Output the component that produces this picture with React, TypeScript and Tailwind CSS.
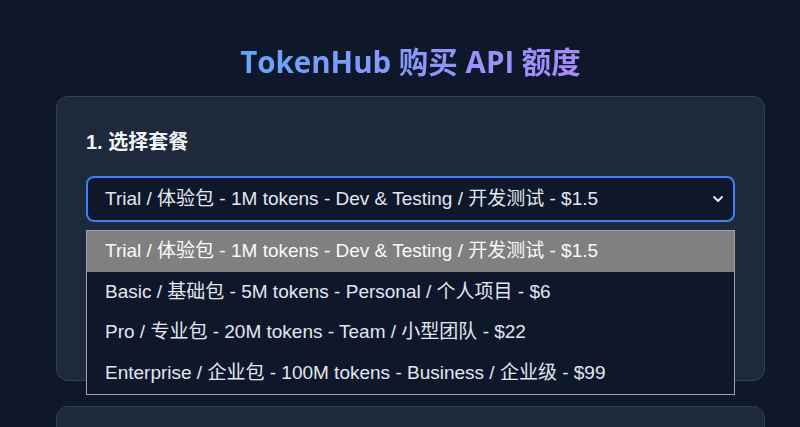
import React from "react";

const options = [
  "Trial / 体验包 - 1M tokens - Dev & Testing / 开发测试 - $1.5",
  "Basic / 基础包 - 5M tokens - Personal / 个人项目 - $6",
  "Pro / 专业包 - 20M tokens - Team / 小型团队 - $22",
  "Enterprise / 企业包 - 100M tokens - Business / 企业级 - $99",
];

const font = { fontFamily: '"Liberation Sans", Arial, "Noto Sans CJK SC", sans-serif' };

export default function App() {
  return (
    <div
      className="h-screen bg-[#0f172a] pl-[56px] pr-[35px] overflow-hidden relative"
      style={font}
    >
      <h1
        className="pt-[40px] h-[84px] leading-[44px] text-center text-[29.5px] font-bold"
        style={{ fontFamily: '"Open Sans", "Noto Sans CJK SC", sans-serif' }}
      >
        <span className="bg-gradient-to-r from-[#60a5fa] to-[#a78bfa] bg-clip-text text-transparent">
          TokenHub 购买 API 额度
        </span>
      </h1>
      <div className="mt-[12px] rounded-[12px] border border-[#334155] bg-[#1e293b] px-[29px] pt-[29px] pb-[30px]">
        <div className="text-[20px] leading-[32px] font-bold text-[#f1f5f9]">1. 选择套餐</div>
        <div className="mt-[18px] h-[46px] rounded-[8px] border-2 border-[#3b82f6] bg-[#0f172a] flex items-center pl-[17px] pr-[8px] text-[19px] text-[#e2e8f0]">
          <span className="flex-1">{options[0]}</span>
          <svg width="12" height="8" viewBox="0 0 12 8" className="mr-[1px]">
            <path d="M2 2 L6 6 L10 2" stroke="#e2e8f0" strokeWidth="2" fill="none" strokeLinecap="round" strokeLinejoin="round" />
          </svg>
        </div>
        <div className="h-[128px]" />
      </div>
      <div className="mt-[25px] h-[60px] rounded-[12px] border border-[#334155] bg-[#1e293b]" />

      <div className="absolute left-[86px] top-[230px] w-[649px] border border-[#a3a3a3] bg-[#0f172a] text-[19px] text-[#e2e8f0]">
        {options.map((o, i) => (
          <div
            key={o}
            className={
              "h-[40.67px] flex items-center pl-[18px] " +
              (i === 0 ? "bg-[#808080] text-[#f8fafc]" : "")
            }
          >
            {o}
          </div>
        ))}
      </div>
    </div>
  );
}
